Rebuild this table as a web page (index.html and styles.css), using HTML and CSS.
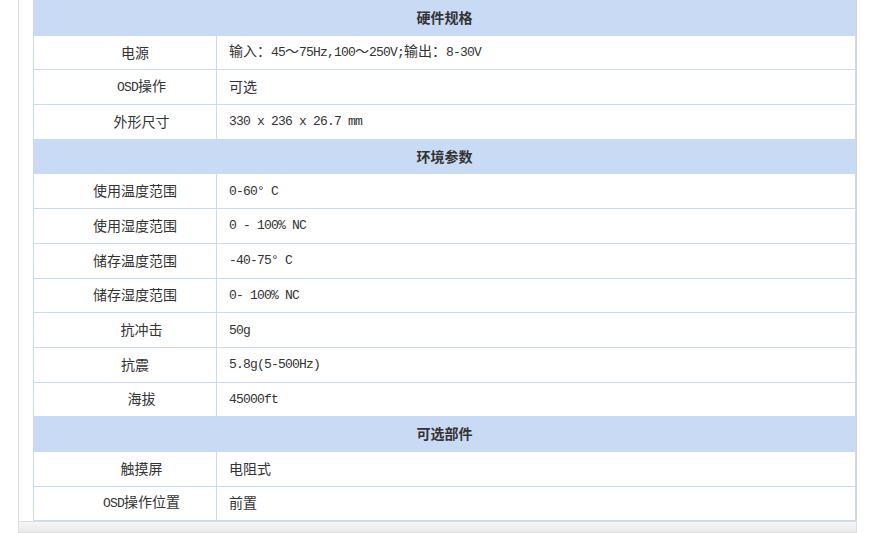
FILE: index.html
```html
<!DOCTYPE html>
<html lang="zh-CN">
<head>
<meta charset="utf-8">
<title>规格参数</title>
<link rel="stylesheet" href="styles.css">
</head>
<body>
<div class="frame">
  <div class="sheet">
    <table class="spec">
      <colgroup><col class="col-name"><col class="col-value"></colgroup>
      <tr class="group"><th colspan="2">硬件规格</th></tr>
      <tr><td class="name shift">电源</td><td class="value">输入：<span class="en">45</span>～<span class="en">75Hz,100</span>～<span class="en">250V;</span>输出：<span class="en">8-30V</span></td></tr>
      <tr><td class="name"><span class="en">OSD</span>操作</td><td class="value">可选</td></tr>
      <tr><td class="name">外形尺寸</td><td class="value"><span class="en">330 x 236 x 26.7 mm</span></td></tr>
      <tr class="group"><th colspan="2">环境参数</th></tr>
      <tr><td class="name shift">使用温度范围</td><td class="value"><span class="en">0-60° C</span></td></tr>
      <tr><td class="name shift">使用湿度范围</td><td class="value"><span class="en">0 - 100% NC</span></td></tr>
      <tr><td class="name shift">储存温度范围</td><td class="value"><span class="en">-40-75° C</span></td></tr>
      <tr><td class="name shift">储存湿度范围</td><td class="value"><span class="en">0- 100% NC</span></td></tr>
      <tr><td class="name">抗冲击</td><td class="value"><span class="en">50g</span></td></tr>
      <tr><td class="name shift">抗震</td><td class="value"><span class="en">5.8g(5-500Hz)</span></td></tr>
      <tr><td class="name">海拔</td><td class="value"><span class="en">45000ft</span></td></tr>
      <tr class="group"><th colspan="2">可选部件</th></tr>
      <tr><td class="name">触摸屏</td><td class="value">电阻式</td></tr>
      <tr><td class="name"><span class="en">OSD</span>操作位置</td><td class="value">前置</td></tr>
    </table>
  </div>
  <div class="scrollbar"></div>
</div>
</body>
</html>
```
FILE: styles.css
```css
html, body {
  margin: 0;
  padding: 0;
  background: #ffffff;
}

body {
  font-family: "Noto Sans CJK SC", "Liberation Sans", sans-serif;
  font-size: 14px;
  color: #333333;
}

.frame {
  margin-left: 18px;
  width: 839px;
}

.sheet {
  border-left: 1px solid #dddddd;
  border-right: 1px solid #d4d4d4;
  padding-left: 14px;
  padding-right: 0;
}

.spec {
  border-collapse: collapse;
  width: 823px;
  table-layout: fixed;
}

.col-name { width: 183px; }

.spec th,
.spec td {
  border: 1px solid #c9dbf3;
  height: 31.7px;
  padding: 0 0 2px 0;
  vertical-align: middle;
  line-height: 20px;
}

.spec th {
  background: #c9daf4;
  font-weight: bold;
  text-align: center;
  color: #333333;
}

.spec .name {
  text-align: center;
  padding-left: 33px;
  padding-right: 0;
}

.spec .name.shift {
  padding-right: 13px;
}

.spec .value {
  text-align: left;
  padding-left: 12px;
}

.en {
  font-family: "Liberation Mono", monospace;
  font-size: 13px;
  letter-spacing: -0.8px;
}

.scrollbar {
  height: 10px;
  border: 1px solid #dddddd;
  background: linear-gradient(#f6f6f6, #e9e9e9);
}
```
